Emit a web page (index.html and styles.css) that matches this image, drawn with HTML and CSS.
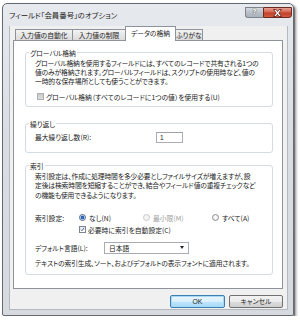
FILE: index.html
```html
<!DOCTYPE html>
<html lang="ja">
<head>
<meta charset="utf-8">
<link rel="stylesheet" href="styles.css">
</head>
<body>
<div class="window">
  <div class="titlebar">
    <span class="title">フィールド「会員番号」のオプション</span>
    <div class="caption">
      <div class="cbtn help">?</div>
      <div class="cbtn close">
        <svg width="11" height="8" viewBox="0 0 11 8"><path d="M1.5 0.5h2.5l1.5 2 1.5-2h2.5l-2.7 3.5 2.7 3.5h-2.5l-1.5-2-1.5 2h-2.5l2.7-3.5z" fill="#fff" stroke="#5a1a14" stroke-width="0.8" stroke-linejoin="round"/></svg>
      </div>
    </div>
  </div>
  <div class="client">
    <div class="tabs">
      <div class="tab t1">入力値の自動化</div>
      <div class="tab t2">入力値の制限</div>
      <div class="tab t3 active">データの格納</div>
      <div class="tab t4">ふりがな</div>
    </div>
    <div class="panel">
      <fieldset class="group g1">
        <legend>グローバル格納</legend>
        <div class="inner">
          <div class="desc">グローバル格納を使用するフィールドには、すべてのレコードで共有される1つの<br>値のみが格納されます。グローバルフィールドは、スクリプトの使用時など、値の<br>一時的な保存場所としても使うことができます。</div>
          <div class="row cbrow">
            <span class="check gray"></span>
            <span>グローバル格納（すべてのレコードに1つの値）を使用する(U)</span>
          </div>
        </div>
      </fieldset>
      <fieldset class="group g2">
        <legend>繰り返し</legend>
        <div class="inner">
          <div class="row">
            <span class="lbl-max">最大繰り返し数(R):</span>
            <span class="input">1</span>
          </div>
        </div>
      </fieldset>
      <fieldset class="group g3">
        <legend>索引</legend>
        <div class="inner">
          <div class="desc d3">索引設定は、作成に処理時間を多少必要としファイルサイズが増えますが、設<br>定後は検索時間を短縮することができ、結合やフィールド値の重複チェックなど<br>の機能も使用できるようになります。</div>
          <div class="row radios">
            <span class="lbl-idx">索引設定:</span>
            <span class="opt o1"><span class="radio on"></span>なし(N)</span>
            <span class="opt o2 disabled"><span class="radio dis"></span>最小限(M)</span>
            <span class="opt o3"><span class="radio"></span>すべて(A)</span>
          </div>
          <div class="row auto">
            <span class="check on"><svg width="7" height="7" viewBox="0 0 7 7"><path d="M1.3 3.6l1.5 1.6 2.9-4" fill="none" stroke="#3b5078" stroke-width="1.2"/></svg></span>
            <span>必要時に索引を自動設定(C)</span>
          </div>
          <div class="row lang">
            <span class="lbl-lang">デフォルト言語(L):</span>
            <span class="select"><span>日本語</span><span class="arrow"></span></span>
          </div>
          <div class="note">テキストの索引生成、ソート、およびデフォルトの表示フォントに適用されます。</div>
        </div>
      </fieldset>
    </div>
    <div class="buttons">
      <div class="btn ok">OK</div>
      <div class="btn cancel">キャンセル</div>
    </div>
  </div>
</div>
</body>
</html>
```

FILE: styles.css
```css
* { box-sizing: border-box; }
html, body { margin: 0; padding: 0; background: #fff; }
body {
  padding: 3px 0 0 2px;
  font-family: "Noto Sans CJK JP", "Noto Sans", sans-serif;
  font-feature-settings: "palt";
  font-size: 6.8px;
  color: #222;
}
.window {
  width: 292px;
  height: 313px;
  border: 1px solid #646a72;
  border-radius: 5px 5px 2px 2px;
  background: linear-gradient(#e6e9ed, #dadee3 40%, #d6dadf);
  box-shadow: 2px 2px 3px rgba(0,0,0,0.45), 1px 1px 0 rgba(0,0,0,0.25);
  display: flex;
  flex-direction: column;
}
.titlebar {
  height: 22px;
  display: flex;
  align-items: flex-start;
  padding-left: 6px;
}
.title {
  font-size: 7.4px;
  line-height: 10px;
  margin-top: 6px;
  color: #1b1b1b;
  flex: 1;
}
.caption {
  display: flex;
  margin-top: 3px;
  margin-right: 1px;
}
.cbtn {
  height: 11px;
  border: 1px solid #7d848c;
  display: flex;
  align-items: center;
  justify-content: center;
}
.help {
  width: 18px;
  border-radius: 0 0 0 3px;
  border-right: none;
  background: linear-gradient(#d5dae0, #b8bfc7 50%, #aab2bb);
  color: #fff;
  font-family: "DejaVu Sans", sans-serif;
  font-weight: bold;
  font-size: 7px;
  line-height: 9px;
  text-shadow: 0 0 1px #444, 0 0 1px #444;
}
.close {
  width: 29px;
  border-color: #6b2a22;
  border-radius: 0 0 3px 0;
  background: linear-gradient(#e8a193, #d4644f 45%, #c4402c 55%, #d05a40);
}
.client {
  margin: 0 5px 5px 6px;
  height: 285px;
  background: #f0f0f0;
  border: 1px solid #b3b9c1;
  border-top: none;
  padding: 0 4px 0 3px;
  display: flex;
  flex-direction: column;
}
.tabs {
  height: 14px;
  display: flex;
  align-items: flex-end;
  padding-left: 2px;
}
.tab {
  height: 11px;
  border: 1px solid #8e939b;
  border-bottom: none;
  margin-right: -1px;
  background: linear-gradient(#f4f4f4, #e6e6e6 50%, #dcdcdc);
  font-size: 6.8px;
  line-height: 10px;
  text-align: center;
  color: #1e1e1e;
  white-space: nowrap;
}
.t1 { width: 58px; }
.t2 { width: 54px; }
.t3 { width: 51px; }
.t4 { width: 28px; }
.tab.active {
  height: 15px;
  margin-bottom: -1px;
  background: #fff;
  position: relative;
  z-index: 1;
  line-height: 12px;
}
.panel {
  height: 249px;
  background: #fff;
  border: 1px solid #8e939b;
  padding: 0 9px 0 11px;
}
.group {
  border: 1px solid #d3dce3;
  border-radius: 3px;
  margin: 0;
  padding: 0;
  min-width: 0;
}
.group legend {
  margin-left: 3px;
  padding: 0 1px;
  font-size: 6.8px;
  line-height: 8px;
  color: #222;
}
.g1 { margin-top: 8px; padding: 2px 0 4px; }
.g2 { margin-top: 13px; padding: 4px 0 9px; }
.g3 { margin-top: 9px; padding: 2px 0 5.5px; }
.inner { padding-left: 9px; }
.desc {
  line-height: 9px;
  white-space: nowrap;
  letter-spacing: -0.15px;
}
.desc.d3 { line-height: 9.5px; }
.row {
  display: flex;
  align-items: center;
  white-space: nowrap;
  line-height: 10px;
}
.cbrow { margin-top: 6px; height: 10px; padding-left: 2px; }
.check {
  width: 7px;
  height: 7px;
  border: 1px solid #8f8f8f;
  margin-right: 2px;
  display: inline-flex;
  align-items: center;
  justify-content: center;
}
.check svg { display: block; }
.check.gray { background: linear-gradient(#c9c9c9, #dedede); border-color: #b0b0b0; }
.check.on { background: linear-gradient(#e4e8ee, #fff); border-color: #7d8590; }
.g2 .row { height: 11px; }
.lbl-max { width: 121px; }
.input {
  width: 27px;
  height: 11px;
  border: 1px solid #abadb3;
  border-top-color: #9da2aa;
  line-height: 9px;
  padding-left: 3px;
  font-family: "Liberation Sans", sans-serif;
  font-size: 6.5px;
}
.radios { margin-top: 12px; height: 11px; }
.lbl-idx { width: 44px; }
.opt { display: inline-flex; align-items: center; }
.o1 { width: 64px; }
.o2 { width: 69px; }
.radio {
  width: 7px;
  height: 7px;
  border-radius: 50%;
  border: 1px solid #8e8f8f;
  background: radial-gradient(circle at 50% 40%, #fff, #e1e3e6);
  margin-right: 3px;
  display: inline-block;
}
.radio.on {
  border-color: #4d6a90;
  background: radial-gradient(circle, #2f6fc4 0, #2c5fae 1.6px, #dfe6ee 2.2px, #f6f8fa 3.5px);
}
.radio.dis { border-color: #c8c8c8; background: #f4f4f4; }
.disabled { color: #a0a0a0; }
.auto { margin-top: 1px; height: 11px; padding-left: 44px; }
.lang { margin-top: 6.5px; height: 12px; }
.lbl-lang { width: 69px; }
.select {
  width: 85px;
  height: 12px;
  border: 1px solid #a9acb2;
  background: #fff;
  display: flex;
  align-items: center;
  justify-content: space-between;
  padding: 0 4px 0 4px;
  line-height: 10px;
}
.arrow {
  width: 0;
  height: 0;
  border-left: 2.5px solid transparent;
  border-right: 2.5px solid transparent;
  border-top: 3px solid #222;
}
.note { margin-top: 5.5px; line-height: 9px; white-space: nowrap; letter-spacing: -0.15px; }
.buttons {
  display: flex;
  justify-content: flex-end;
  gap: 4px;
  margin-top: 6px;
  padding-right: 0;
}
.btn {
  height: 13px;
  width: 55px;
  border: 1px solid #707070;
  border-radius: 2px;
  background: linear-gradient(#f2f2f2, #ebebeb 50%, #dddddd 51%, #cfcfcf);
  text-align: center;
  font-size: 6.8px;
  line-height: 11px;
  color: #1e1e1e;
}
.btn.ok {
  border-color: #3c7fb1;
  box-shadow: inset 0 0 0 1px #a8d8f5;
  background: linear-gradient(#eaf6fd, #d9f0fc 50%, #bee6fd 51%, #a7d9f5);
  font-family: "Liberation Sans", sans-serif;
}
.btn.cancel { width: 54px; }
```
